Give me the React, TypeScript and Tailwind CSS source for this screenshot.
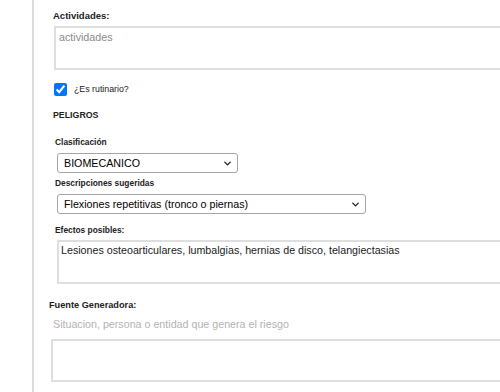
import { ChevronDown } from 'lucide-react'

const Label = ({ children, className = '' }: { children: React.ReactNode; className?: string }) => (
  <div className={`font-bold text-[#222] ${className}`}>{children}</div>
)

const Select = ({ value, width }: { value: string; width: string }) => (
  <div className={`relative ml-[2px] ${width}`}>
    <select
      defaultValue={value}
      className="block w-full h-[20px] appearance-none rounded-[3px] border border-[#a5a5a5] bg-white pl-[6px] text-[10.7px] text-black outline-none"
    >
      <option>{value}</option>
    </select>
    <ChevronDown
      size={11}
      strokeWidth={3}
      className="pointer-events-none absolute right-[5px] top-[5px] text-[#222]"
    />
  </div>
)

const App = () => {
  return (
    <div className="min-h-[392px] bg-white" style={{ fontFamily: '"Liberation Sans", Arial, sans-serif' }}>
      <div className="ml-[32px] min-h-[392px] border-l-2 border-[#dcdcdc] pl-[19px] pt-[10px] overflow-hidden">
        {/* Actividades */}
        <Label className="text-[9.5px] leading-[12px]">Actividades:</Label>
        <textarea
          placeholder="actividades"
          className="mt-[4px] ml-[1px] block h-[44px] w-[500px] resize-none border-2 border-[#dedede] px-[3px] py-[2px] text-[10.7px] leading-[14px] placeholder:text-[#8a8a8a] outline-none"
        />

        {/* Rutinario */}
        <div className="mt-[13px] ml-[1px] flex h-[13px] items-center gap-[7px]">
          <input type="checkbox" defaultChecked className="m-0 h-[13px] w-[13px] accent-[#0075ff]" />
          <span className="text-[8.8px] text-[#222]">¿Es rutinario?</span>
        </div>

        <Label className="mt-[13px] text-[8.8px] leading-[12px]">PELIGROS</Label>

        {/* Peligros */}
        <div className="pl-[2px]">
          <Label className="mt-[15px] text-[8.4px] leading-[12px]">Clasificación</Label>
          <div className="mt-[5px]">
            <Select value="BIOMECANICO" width="w-[181px]" />
          </div>

          <Label className="mt-[4px] text-[8.4px] leading-[12px]">Descripciones sugeridas</Label>
          <div className="mt-[5px]">
            <Select value="Flexiones repetitivas (tronco o piernas)" width="w-[309px]" />
          </div>

          <Label className="mt-[10px] text-[8.4px] leading-[12px]">Efectos posibles:</Label>
          <textarea
            defaultValue="Lesiones osteoarticulares, lumbalgias, hernias de disco, telangiectasias"
            className="mt-[4px] ml-[2px] block h-[44px] w-[500px] resize-none border-2 border-[#dedede] px-[2px] py-[1px] text-[10.7px] leading-[14px] text-[#222] outline-none"
          />
        </div>

        {/* Fuente generadora */}
        <div className="-ml-[4px]">
          <Label className="mt-[15px] text-[9.2px] leading-[12px]">Fuente Generadora:</Label>
          <div className="mt-[6px] pl-[4px] text-[10.7px] leading-[14px] text-[#b3b3b3]">
            Situacion, persona o entidad que genera el riesgo
          </div>
          <textarea className="mt-[8px] ml-[2px] block h-[43px] w-[500px] resize-none border-2 border-[#dedede] outline-none" />
        </div>
      </div>
    </div>
  )
}

export default App
